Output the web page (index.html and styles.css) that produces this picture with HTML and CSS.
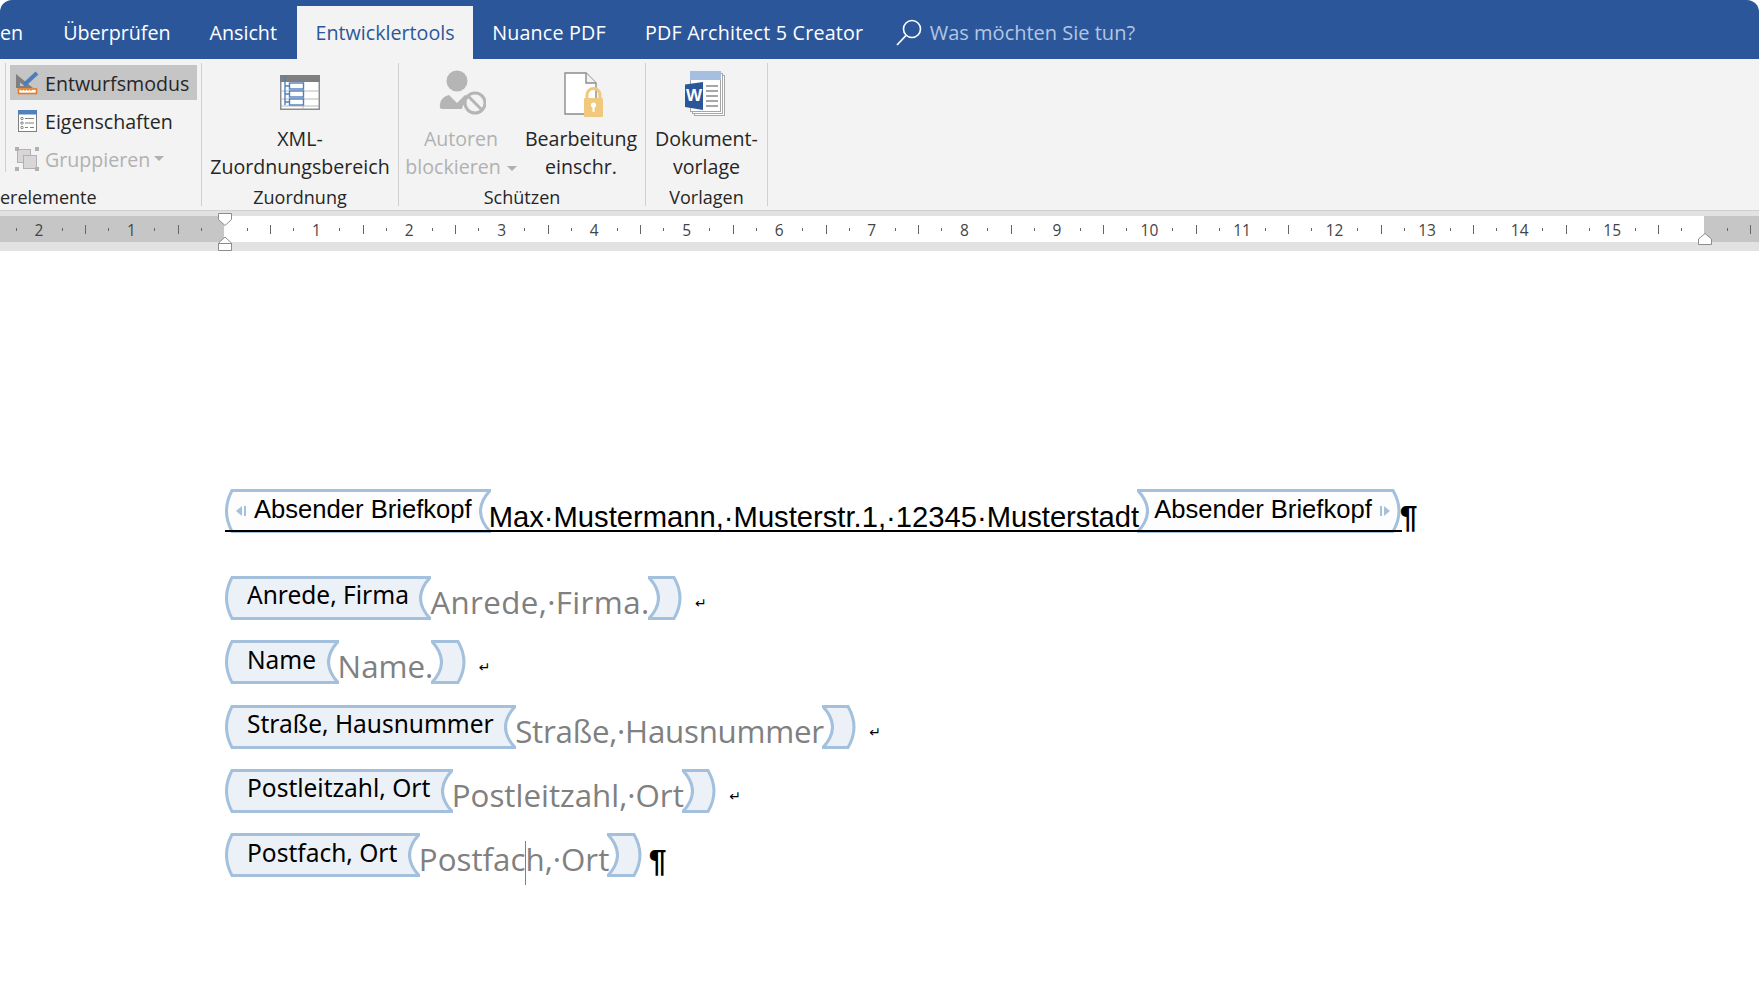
FILE: index.html
```html
<!DOCTYPE html>
<html lang="de">
<head>
  <meta charset="UTF-8" />
  <title>Entwicklertools</title>
  <link rel="stylesheet" href="styles.css">
</head>
<body>
  <!-- end caps of the content controls -->
  <svg class="defs" width="0" height="0">
    <symbol id="cap-open" viewBox="0 0 10 44">
      <path class="cap-fill" d="M10 1.5H7Q-4 22 7 42.5H10Z"/>
      <path class="cap-line" d="M10 1.5H7Q-4 22 7 42.5H10"/>
    </symbol>
    <symbol id="cap-open-end" viewBox="0 0 12 44">
      <path class="cap-fill" d="M0 1.5H11Q-8 22 11 42.5H0Z"/>
      <path class="cap-line" d="M0 1.5H11Q-8 22 11 42.5H0"/>
    </symbol>
    <symbol id="cap-close" viewBox="0 0 12 44">
      <path class="cap-fill" d="M12 1.5H1Q20 22 1 42.5H12Z"/>
      <path class="cap-line" d="M12 1.5H1Q20 22 1 42.5H12"/>
    </symbol>
    <symbol id="cap-close-end" viewBox="0 0 10 44">
      <path class="cap-fill" d="M0 1.5H2Q14 22 2 42.5H0Z"/>
      <path class="cap-line" d="M0 1.5H2Q14 22 2 42.5H0"/>
    </symbol>
  </svg>

  <nav class="tabs">
    <span class="tab tab-cut">en</span>
    <span class="tab">Überprüfen</span>
    <span class="tab">Ansicht</span>
    <span class="tab tab-active">Entwicklertools</span>
    <span class="tab tab-wide">Nuance PDF</span>
    <span class="tab tab-wide">PDF Architect 5 Creator</span>
    <span class="tell-me">
      <svg width="26" height="28" viewBox="0 0 26 28"><circle cx="16" cy="10" r="8.5" fill="none" stroke="#fff" stroke-width="1.6"/><path d="M10 16.5L1 26" fill="none" stroke="#fff" stroke-width="1.8"/></svg>
      <span>Was möchten Sie tun?</span>
    </span>
  </nav>

  <section class="ribbon">
    <div class="group group-controls">
      <div class="group-body small-list">
        <div class="small-btn small-btn-on">
          <svg width="24" height="24" viewBox="0 0 24 24"><path d="M1 3L18 17H1Z" fill="#7f7f7f"/><path d="M5 11.5L9.5 15H5Z" fill="#c5c5c5"/><path d="M22 2L9 14" stroke="#4a7ebb" stroke-width="4" fill="none"/><rect x="3.5" y="18" width="18" height="4.5" fill="#fff" stroke="#e87b22" stroke-width="1.6"/><path d="M7 18v2M10 18v2M13 18v2M16 18v2" stroke="#e87b22"/></svg>
          <span>Entwurfsmodus</span>
        </div>
        <div class="small-btn">
          <svg width="24" height="24" viewBox="0 0 24 24"><rect x="3.5" y="1.5" width="18" height="21" fill="#fff" stroke="#7f7f7f"/><rect x="3" y="1" width="19" height="4.5" fill="#4e81bd"/><g fill="none" stroke="#7f7f7f"><circle cx="7" cy="9.5" r="1.2"/><circle cx="7" cy="14" r="1.2"/><circle cx="7" cy="18.5" r="1.2"/><path d="M10 9.5h9M10 14h9M10 18.5h3M15 18.5h4"/></g></svg>
          <span>Eigenschaften</span>
        </div>
        <div class="small-btn small-btn-off">
          <svg width="24" height="24" viewBox="0 0 24 24"><g fill="#d9d6d7" stroke="#b1b1b1"><rect x="2.5" y="2.5" width="13" height="13"/><rect x="8.5" y="8.5" width="13" height="13"/></g><g fill="#b1b1b1"><rect x="0" y="0" width="4" height="4"/><rect x="20" y="0" width="4" height="4"/><rect x="0" y="20" width="4" height="4"/><rect x="20" y="20" width="4" height="4"/></g></svg>
          <span>Gruppieren</span><i class="caret caret-small"></i>
        </div>
      </div>
      <div class="group-label group-label-cut">erelemente</div>
    </div>

    <div class="group group-xml">
      <div class="group-body">
        <div class="big-btn">
          <div class="big-icon big-icon-low">
            <svg width="40" height="35" viewBox="0 0 40 35"><rect x="0.75" y="0.75" width="38.5" height="33.5" fill="#fff" stroke="#8c8c8c" stroke-width="1.5"/><rect x="0" y="0" width="40" height="7" fill="#7f7f7f"/><path d="M23 7v27M1 16h38M1 24h38M1 31h38" stroke="#b8b8b8" fill="none"/><path d="M5 0v30M5 11h4M5 19h4M5 27h4" stroke="#4e81bd" stroke-width="1.4" fill="none"/><g fill="#fff" stroke="#4e81bd" stroke-width="1.4"><rect x="9.5" y="8" width="14" height="6"/><rect x="9.5" y="16" width="14" height="6"/><rect x="9.5" y="24" width="14" height="6"/></g></svg>
          </div>
          <span>XML-<br>Zuordnungsbereich</span>
        </div>
      </div>
      <div class="group-label">Zuordnung</div>
    </div>

    <div class="group group-protect">
      <div class="group-body">
        <div class="big-btn big-btn-off big-btn-authors">
          <div class="big-icon">
            <svg width="50" height="46" viewBox="0 0 50 46"><circle cx="21" cy="11" r="10.5" fill="#b5b5b5"/><path d="M6 39q-3 0-2-5 1-7 9-9l8 8 8-8q5 1 7 5-9 2-10 9Z" fill="#b5b5b5"/><circle cx="39" cy="33" r="10" fill="#f3f3f3" stroke="#b5b5b5" stroke-width="3"/><path d="M32 26l14 14" stroke="#b5b5b5" stroke-width="3"/></svg>
          </div>
          <span>Autoren<br>blockieren<i class="caret"></i></span>
        </div>
        <div class="big-btn big-btn-restrict">
          <div class="big-icon big-icon-page">
            <svg width="40" height="46" viewBox="0 0 40 46"><path d="M1 2H22L32 12V43H1Z" fill="#fff" stroke="#8c8c8c" stroke-width="1.4"/><path d="M22 2V12H32" fill="#f3f3f3" stroke="#8c8c8c" stroke-width="1.4"/><path d="M23 29v-5a6.5 6.5 0 0 1 13 0v5" fill="none" stroke="#f0c97f" stroke-width="3"/><rect x="20" y="27" width="19" height="19" rx="1" fill="#f0c97f"/><circle cx="29.5" cy="34" r="2.6" fill="#fff"/><rect x="28.5" y="35" width="2" height="6" fill="#fff"/></svg>
          </div>
          <span>Bearbeitung<br>einschr.</span>
        </div>
      </div>
      <div class="group-label">Schützen</div>
    </div>

    <div class="group group-templates">
      <div class="group-body">
        <div class="big-btn">
          <div class="big-icon big-icon-word">
            <svg width="40" height="46" viewBox="0 0 40 46"><g fill="#fff" stroke="#a6a6a6"><rect x="9.5" y="5.5" width="30" height="40"/><rect x="7.5" y="3.5" width="30" height="40"/><rect x="5.5" y="1.5" width="30" height="40"/></g><rect x="5" y="1" width="31" height="9" fill="#a6bee0"/><path d="M21 16h12M21 21h12M21 26h12M21 31h12M21 36h12" stroke="#a6a6a6" stroke-width="2"/><path d="M0 14.5L18 12V40L0 37Z" fill="#2b579a"/><text class="word-w" x="9" y="31" text-anchor="middle">W</text></svg>
          </div>
          <span>Dokument-<br>vorlage</span>
        </div>
      </div>
      <div class="group-label">Vorlagen</div>
    </div>
  </section>

  <div class="ruler">
    <div class="ruler-margin ruler-left">
      <span class="cm">2</span><span class="cm">1</span><span class="cm cm-zero"></span>
    </div>
    <div class="ruler-page">
      <span class="cm cm-first"></span><span class="cm">1</span><span class="cm">2</span><span class="cm">3</span><span class="cm">4</span><span class="cm">5</span><span class="cm">6</span><span class="cm">7</span><span class="cm">8</span><span class="cm">9</span><span class="cm">10</span><span class="cm">11</span><span class="cm">12</span><span class="cm">13</span><span class="cm">14</span><span class="cm">15</span><span class="cm"></span>
    </div>
    <div class="ruler-margin">
      <span class="cm cm-first"></span><span class="cm"></span>
    </div>
    <svg class="marker marker-indent" width="14" height="38" viewBox="0 0 14 38"><path d="M.5.5h13v6L7 12.5.5 6.5z" fill="#fff" stroke="#8c8c8c"/><path d="M7 24l6.5 6v7.5H.5V30z" fill="#fff" stroke="#8c8c8c"/><path d="M.5 30.5h13" stroke="#8c8c8c"/></svg>
    <svg class="marker marker-right" width="14" height="12" viewBox="0 0 14 12"><path d="M7 .5l6.5 5.5v5.5H.5V6z" fill="#fff" stroke="#8c8c8c"/></svg>
  </div>

  <main class="doc">
    <div class="doc-line doc-head">
      <span class="tag tag-plain">
        <svg class="cap" width="10" height="44"><use href="#cap-open"/></svg>
        <span class="tag-label tag-label-head">
          <svg class="tag-arrow" width="12" height="10" viewBox="0 0 12 10"><path d="M7 0v10L1 5z" fill="#a3c0dc"/><rect x="9" y="0" width="2" height="10" fill="#a3c0dc"/></svg>
          Absender Briefkopf
        </span>
        <svg class="cap" width="12" height="44"><use href="#cap-open-end"/></svg>
      </span>
      <span class="value-head">Max·Mustermann,·Musterstr.1,·12345·Musterstadt</span>
      <span class="tag tag-plain">
        <svg class="cap" width="12" height="44"><use href="#cap-close"/></svg>
        <span class="tag-label tag-label-head tag-label-close">
          Absender Briefkopf
          <svg class="tag-arrow" width="12" height="10" viewBox="0 0 12 10"><rect x="1" y="0" width="2" height="10" fill="#a3c0dc"/><path d="M5 0v10l6-5z" fill="#a3c0dc"/></svg>
        </span>
        <svg class="cap" width="10" height="44"><use href="#cap-close-end"/></svg>
      </span>
      <span class="pilcrow pilcrow-head">¶</span>
    </div>

    <div class="doc-line">
      <span class="tag"><svg class="cap" width="10" height="44"><use href="#cap-open"/></svg><span class="tag-label">Anrede, Firma</span><svg class="cap" width="12" height="44"><use href="#cap-open-end"/></svg></span>
      <span class="value value-loose">Anrede,·Firma.</span>
      <span class="tag"><svg class="cap" width="12" height="44"><use href="#cap-close"/></svg><span class="tag-gap"></span><svg class="cap" width="10" height="44"><use href="#cap-close-end"/></svg></span>
      <span class="line-break">↵</span>
    </div>

    <div class="doc-line">
      <span class="tag"><svg class="cap" width="10" height="44"><use href="#cap-open"/></svg><span class="tag-label">Name</span><svg class="cap" width="12" height="44"><use href="#cap-open-end"/></svg></span>
      <span class="value">Name.</span>
      <span class="tag"><svg class="cap" width="12" height="44"><use href="#cap-close"/></svg><span class="tag-gap"></span><svg class="cap" width="10" height="44"><use href="#cap-close-end"/></svg></span>
      <span class="line-break">↵</span>
    </div>

    <div class="doc-line">
      <span class="tag"><svg class="cap" width="10" height="44"><use href="#cap-open"/></svg><span class="tag-label">Straße, Hausnummer</span><svg class="cap" width="12" height="44"><use href="#cap-open-end"/></svg></span>
      <span class="value value-tight">Straße,·Hausnummer</span>
      <span class="tag"><svg class="cap" width="12" height="44"><use href="#cap-close"/></svg><span class="tag-gap"></span><svg class="cap" width="10" height="44"><use href="#cap-close-end"/></svg></span>
      <span class="line-break">↵</span>
    </div>

    <div class="doc-line">
      <span class="tag"><svg class="cap" width="10" height="44"><use href="#cap-open"/></svg><span class="tag-label">Postleitzahl, Ort</span><svg class="cap" width="12" height="44"><use href="#cap-open-end"/></svg></span>
      <span class="value">Postleitzahl,·Ort</span>
      <span class="tag"><svg class="cap" width="12" height="44"><use href="#cap-close"/></svg><span class="tag-gap"></span><svg class="cap" width="10" height="44"><use href="#cap-close-end"/></svg></span>
      <span class="line-break">↵</span>
    </div>

    <div class="doc-line">
      <span class="tag"><svg class="cap" width="10" height="44"><use href="#cap-open"/></svg><span class="tag-label">Postfach, Ort</span><svg class="cap" width="12" height="44"><use href="#cap-open-end"/></svg></span>
      <span class="value">Postfac<i class="text-cursor"></i>h,·Ort</span>
      <span class="tag"><svg class="cap" width="12" height="44"><use href="#cap-close"/></svg><span class="tag-gap"></span><svg class="cap" width="10" height="44"><use href="#cap-close-end"/></svg></span>
      <span class="pilcrow pilcrow-end">¶</span>
    </div>
  </main>
</body>
</html>
```

FILE: styles.css
```css
html, body {
  margin: 0;
  height: 100%;
  background: #fff;
  overflow: hidden;
}
body {
  font-family: "Open Sans", "Noto Sans", sans-serif;
  color: #262626;
}
.defs {
  position: absolute;
}

/* tabs */
.tabs {
  display: flex;
  align-items: flex-end;
  height: 59px;
  background: #2b579a;
  border-radius: 12px 12px 0 0;
  font-size: 19.7px;
  color: #fff;
}
.tab {
  height: 53px;
  padding: 0 19.5px;
  line-height: 53px;
  white-space: nowrap;
}
.tab-cut {
  padding: 0 20.5px 0 0;
}
.tab-active {
  margin-left: 1px;
  padding: 0 18px;
  background: #f3f3f3;
  color: #2b579a;
}
.tab-wide {
  letter-spacing: .2px;
}
.tell-me {
  display: flex;
  align-items: center;
  gap: 8px;
  height: 53px;
  margin-left: 13px;
  font-size: 20px;
  color: #b4c6e2;
}

/* ribbon */
.ribbon {
  display: flex;
  height: 143px;
  padding: 4px 0;
  background: #f3f3f3;
  font-size: 19.6px;
}
.group {
  display: flex;
  flex-direction: column;
  border-right: 1px solid #d0d0d0;
}
.group-controls {
  width: 201px;
}
.group-xml {
  width: 196px;
}
.group-protect {
  width: 246px;
}
.group-templates {
  width: 121px;
}
.group-body {
  flex: 1;
  display: flex;
  justify-content: center;
}
.group-protect .group-body {
  justify-content: flex-start;
}
.group-label {
  height: 20px;
  line-height: 23px;
  font-size: 18px;
  text-align: center;
}
.group-label-cut {
  text-align: left;
}
.small-list {
  box-sizing: border-box;
  flex: none;
  flex-direction: column;
  justify-content: flex-start;
  height: 109px;
  margin: 0 0 14px 5px;
  padding: 2px 4px 0;
  border-left: 1px solid #d0d0d0;
}
.small-btn {
  display: flex;
  flex: none;
  align-items: center;
  gap: 6px;
  height: 35px;
  margin-bottom: 3px;
  padding-left: 5px;
  white-space: nowrap;
}
.small-btn span {
  padding-top: 2px;
}
.small-btn-on {
  background: #c5c5c5;
}
.small-btn-off {
  color: #b1b1b1;
}
.big-btn {
  flex: 1;
  padding-top: 7px;
  text-align: center;
  line-height: 28px;
  white-space: nowrap;
}
.big-btn-off {
  color: #b1b1b1;
}
.big-btn-authors {
  flex: none;
  width: 124px;
}
.big-btn-restrict {
  flex: none;
  width: 116px;
}
.big-icon {
  display: flex;
  justify-content: center;
  align-items: flex-start;
  height: 55px;
}
.big-icon-low {
  box-sizing: border-box;
  padding-top: 5px;
}
.big-icon-page {
  box-sizing: border-box;
  padding: 1px 0 0 5px;
}
.big-icon-word {
  padding-right: 4px;
  height: 55px;
}
.caret {
  display: inline-block;
  margin-left: 6px;
  vertical-align: middle;
  border: 5px solid transparent;
  border-top-color: #b1b1b1;
  border-bottom-width: 0;
}
.caret-small {
  margin-left: -2px;
}
.word-w {
  font: bold 17px "Liberation Sans", sans-serif;
  fill: #fff;
}

/* ruler */
.ruler {
  position: relative;
  display: flex;
  height: 26px;
  padding: 5px 0 9px;
  border-top: 1px solid #d0d0d0;
  background: #e2e2e2;
  font-size: 15.5px;
  color: #444;
}
.ruler-margin, .ruler-page {
  display: flex;
  overflow: hidden;
}
.ruler-margin {
  flex: 1;
  background: #c6c6c6;
}
.ruler-left {
  flex: none;
  width: 224px;
  justify-content: flex-end;
}
.ruler-page {
  flex: none;
  width: 1480px;
  background: #fff;
}
.cm {
  flex: 0 0 92.55px;
  line-height: 28px;
  text-align: center;
  background:
    linear-gradient(#666, #666) 0 50% / 1px 9px no-repeat,
    linear-gradient(#666, #666) 23px 50% / 1px 3px no-repeat,
    linear-gradient(#666, #666) 69px 50% / 1px 3px no-repeat;
}
.cm-first {
  margin-left: -46.3px;
}
.cm-zero {
  margin-right: -46.3px;
}
.marker {
  position: absolute;
}
.marker-indent {
  left: 218px;
  top: 2px;
}
.marker-right {
  left: 1698px;
  top: 22px;
}

/* document */
.doc {
  display: flex;
  flex-direction: column;
  gap: 20.3px;
  padding: 238px 0 0 225px;
}
.doc-line {
  display: flex;
  height: 44px;
}
.doc-head {
  position: relative;
  align-self: flex-start;
  margin-bottom: 22.7px;
}
.doc-head::after {
  content: "";
  position: absolute;
  left: 0;
  right: 16px;
  bottom: 1px;
  height: 2px;
  background: #000;
}
.tag {
  --tag-fill: #ecf1f8;
  display: flex;
  height: 44px;
  flex: none;
}
.tag-plain {
  --tag-fill: #fdfdfd;
}
.cap {
  display: block;
  flex: none;
}
.cap-fill {
  fill: var(--tag-fill);
}
.cap-line {
  fill: none;
  stroke: #a3c0dc;
  stroke-width: 3;
}
.tag-label {
  display: flex;
  align-items: center;
  box-sizing: border-box;
  height: 44px;
  padding: 0 10.5px 6px 12px;
  border-top: 3px solid #a3c0dc;
  border-bottom: 3px solid #a3c0dc;
  background: var(--tag-fill);
  font-family: "Noto Sans", sans-serif;
  font-size: 24.5px;
  color: #000;
  white-space: nowrap;
}
.tag-label-head {
  gap: 7px;
  padding: 0 7px 4px 0;
  font-family: "Liberation Sans", sans-serif;
  font-size: 25.6px;
}
.tag-label-close {
  padding: 0 0 4px 5px;
}
.tag-arrow {
  margin-top: 4px;
}
.tag-gap {
  box-sizing: border-box;
  width: 12.5px;
  height: 44px;
  border-top: 3px solid #a3c0dc;
  border-bottom: 3px solid #a3c0dc;
  background: var(--tag-fill);
}
.value {
  margin: 0 -2px 0 -1px;
  padding-top: 4px;
  font-size: 31.3px;
  line-height: 44px;
  color: #808080;
  white-space: nowrap;
}
.value-loose {
  letter-spacing: .38px;
}
.value-tight {
  letter-spacing: -.25px;
}
.value-head {
  margin: 0 -2px;
  padding-top: 6px;
  font-family: "Liberation Sans", sans-serif;
  font-size: 29.2px;
  line-height: 44px;
  color: #000;
  white-space: nowrap;
}
.text-cursor {
  display: inline-block;
  width: 1px;
  height: 44px;
  margin-right: -1px;
  background: #808080;
  vertical-align: middle;
}
.line-break {
  margin-left: 13px;
  padding-top: 17px;
  font-family: "DejaVu Sans", sans-serif;
  font-size: 14px;
  line-height: 20px;
  color: #000;
}
.pilcrow {
  padding-top: 6px;
  font-family: "Liberation Sans", sans-serif;
  font-weight: bold;
  font-size: 32px;
  line-height: 44px;
  color: #000;
}
.pilcrow-head {
  margin-left: -1px;
}
.pilcrow-end {
  margin-left: 7px;
}
```
